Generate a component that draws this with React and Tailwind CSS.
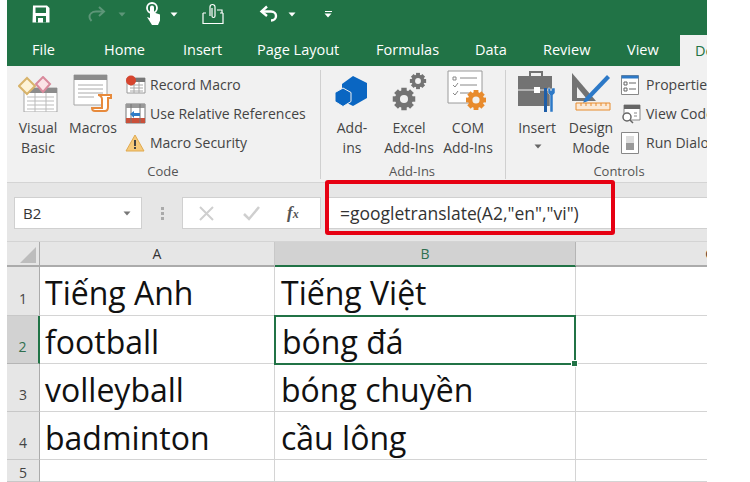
const F = { fontFamily: '"Open Sans", "Noto Sans", sans-serif' };
const Caret = ({ c = '#fff', className = '' }) => (
  <svg width="8" height="5" viewBox="0 0 8 5" className={className}><path d="M0.5 0.5h7L4 4.5z" fill={c} /></svg>
);
const Save = () => (
  <svg width="20" height="20" viewBox="0 0 20 20"><path d="M2 1.5h14l2.5 2.5v14.5h-17z" fill="#fff"/><path d="M4.5 3.5h10.5v5.5h-10.5z" fill="#217346"/><path d="M5 12h10v6.5h-10z" fill="#217346"/><path d="M7 14h5v4.5h-5z" fill="#fff"/></svg>
);
const Redo = () => (
  <svg width="20" height="16" viewBox="0 0 20 16" fill="none" stroke="#5d9678" strokeWidth="2"><path d="M12 1l5 4.5-5 4.5"/><path d="M17 5.5H9C5 5.5 2.5 8 2.5 11c0 1.500 1 3 2 4"/></svg>
);
const Touch = () => (
  <svg width="18" height="24" viewBox="0 0 18 24"><circle cx="7" cy="6" r="5" fill="none" stroke="#fff" strokeWidth="1.800"/><path d="M5 5.500a2 2 0 0 1 4 0v5l6 2v6l-2 4.500H7l-5-8 3 1z" fill="#fff"/></svg>
);
const Mail = () => (
  <svg width="24" height="22" viewBox="0 0 24 22" fill="none" stroke="#fff" strokeWidth="1.200"><path d="M1 10v10.500h20V10M1 10h3M18 10h3"/><path d="M8 13V4a2.500 2.500 0 0 1 5 0v9a1.500 1.500 0 0 1-3 0V5"/><path d="M15 7h5v3"/></svg>
);
const Undo = () => (
  <svg width="20" height="18" viewBox="0 0 20 18" fill="none" stroke="#fff" strokeWidth="2.400"><path d="M8 1.500L2.500 6.500 8 11"/><path d="M3 6.500h9c3 0 5 2 5 4.500s-2 4.500-5 4.500"/></svg>
);
const VB = () => (
  <svg width="40" height="36" viewBox="0 0 40 36"><path d="M6 12h33v24H6z" fill="#fff" stroke="#a5a5a5"/><path d="M6 12h33v5H6z" fill="#8c8c8c"/><path d="M9 21h27M9 25h27M9 29h27M9 33h27M17 17v19M28 17v19" stroke="#bbb"/><path d="M9 2l8 8-8 8-8-8z" fill="#fdf3d8" stroke="#d8b36a" strokeWidth="2"/><path d="M25 1l7 7-7 8-7-8z" fill="#fbe3e6" stroke="#d98a9c" strokeWidth="2"/></svg>
);
const Macros = () => (
  <svg width="40" height="38" viewBox="0 0 40 38"><path d="M1 1h33v30H1z" fill="#fff" stroke="#a5a5a5"/><path d="M1 1h33v5H1z" fill="#8c8c8c"/><path d="M5 11h25M5 15h25M5 19h25M5 23h16" stroke="#aaa"/><path d="M25 21h13v3h-3v9c0 2-1 4-3 4H22c-2 0-3-1-3-3h10V25c0-2-2-4-4-4z" fill="#fff" stroke="#e78a3c" strokeWidth="2"/></svg>
);
const Rec = () => (
  <svg width="21" height="19" viewBox="0 0 21 19"><path d="M2 3h18v15H2z" fill="#fff" stroke="#999"/><path d="M2 3h18v4H2z" fill="#777"/><path d="M5 10h13M5 13h13M5 16h13M9 7v11M14 7v11" stroke="#aaa"/><circle cx="6" cy="5.500" r="5" fill="#d6452f"/></svg>
);
const Rel = () => (
  <svg width="21" height="21" viewBox="0 0 21 21"><path d="M1 1h19v19H1z" fill="#fff" stroke="#777"/><path d="M1 1h19v4H1z" fill="#999"/><path d="M1 15h19v5H1z" fill="#c9503a"/><path d="M6 1v19M15 1v19" stroke="#777"/><path d="M5 11l4-3v2h6v3H9v2z" fill="#2f7cc6"/></svg>
);
const Warn = () => (
  <svg width="20" height="18" viewBox="0 0 20 18"><path d="M10 1l9 16H1z" fill="#f5c97a" stroke="#e0a94f"/><path d="M9 6h2v6H9zM9 13h2v2H9z" fill="#444"/></svg>
);
const Hex = () => (
  <svg width="36" height="36" viewBox="0 0 36 36"><path d="M19 0l14 7v15l-14 8-6-3v-8l-5-3V8z" fill="#0a66c2"/><path d="M9 12l8 4.500v9l-8 5-8-5v-9z" fill="#0a66c2" stroke="#f1f1f1"/></svg>
);
const Gear = ({ x, y, r, c }) => {
  const t = [0, 45, 90, 135].map(a => <rect key={a} x={x - r * 0.3} y={y - r * 1.25} width={r * 0.6} height={r * 2.5} fill={c} transform={`rotate(${a} ${x} ${y})`} />);
  return <g>{t}<circle cx={x} cy={y} r={r} fill={c} /><circle cx={x} cy={y} r={r * 0.45} fill="#f1f1f1" /></g>;
};
const Gears = () => (
  <svg width="36" height="40" viewBox="0 0 36 40"><Gear x={13} y={27} r={9} c="#737373" /><Gear x={27} y={9} r={6.500} c="#737373" /></svg>
);
const Com = () => (
  <svg width="42" height="42" viewBox="0 0 42 42"><path d="M1 1h34v32H1z" fill="#fff" stroke="#9a9a9a"/><path d="M6 7h3v3H6zM13 8h17M6 15l2 2 3-4M13 15h17M6 23l2 2 3-4M13 23h10" fill="none" stroke="#888"/><Gear x={29} y={30} r={8} c="#e88b2d" /></svg>
);
const Case = () => (
  <svg width="40" height="42" viewBox="0 0 40 42"><path d="M13 6V2h12v4" fill="none" stroke="#737373" strokeWidth="2"/><path d="M1 6h34v30H1z" fill="#737373"/><path d="M1 20h34" stroke="#f1f1f1"/><path d="M17 17h6v6h-6z" fill="#fff"/><path d="M27 18h3v24h-3z" fill="#1f5ea8"/><path d="M33 18l1 3 1-3 3 0v5l-2 2v17h-3V25l-2-2v-5z" fill="#2d79c7" stroke="#f1f1f1" strokeWidth="0.500"/></svg>
);
const Design = () => (
  <svg width="40" height="40" viewBox="0 0 40 40"><path d="M1 1l24 28H1z" fill="#737373"/><path d="M6 15l9 11H6z" fill="#f1f1f1"/><path d="M14 26L36 3l3 3-22 23-5 2z" fill="#2d79c7"/><path d="M5 31h34v7H5z" fill="#fbe9d6" stroke="#e88b2d"/><path d="M10 31v3M15 31v3M20 31v3M25 31v3M30 31v3M35 31v3" stroke="#e88b2d"/></svg>
);
const Prop = () => (
  <svg width="18" height="20" viewBox="0 0 18 20"><path d="M.5.5h17v19H.5z" fill="#fff" stroke="#888"/><path d="M.5.5h17v3H.5z" fill="#2d79c7"/><path d="M3 7h3v3H3zM3 13h3v3H3z" fill="none" stroke="#666"/><path d="M8 8h7M8 14h7" stroke="#666"/></svg>
);
const Code = () => (
  <svg width="20" height="20" viewBox="0 0 20 20"><path d="M3 1h16v15H3z" fill="#fff" stroke="#888"/><path d="M3 1h16v4H3z" fill="#666"/><circle cx="6" cy="13" r="4" fill="#fff" stroke="#666" strokeWidth="1.500"/><path d="M9 16l3 3" stroke="#666" strokeWidth="1.500"/><path d="M13 9h3M13 12h3" stroke="#888"/></svg>
);
const Dlg = () => (
  <svg width="18" height="22" viewBox="0 0 18 22"><path d="M.5.5h17v21H.5z" fill="#fff" stroke="#888"/><path d="M5 4h8v14H5z" fill="#ddd"/><path d="M5 11h8v7H5z" fill="#999"/></svg>
);

const Big = ({ icon, label, w, h = 'h-[40px]', ml = '' }) => (
  <div className={`flex flex-col items-center shrink-0 ${ml}`} style={{ width: w }}>
    <div className={`${h} flex items-end justify-center`}>{icon}</div>
    <div className="text-center text-[14px] leading-[20px] mt-[6px] text-[#444] whitespace-pre">{label}</div>
  </div>
);
const Small = ({ icon, label }) => (
  <div className="flex items-center h-[29px] text-[14px] text-[#444] whitespace-nowrap">
    <div className="w-[25px] flex justify-start shrink-0">{icon}</div>{label}
  </div>
);
const Cap = ({ children, className = '' }) => (
  <div className={`text-center text-[13px] leading-[16px] text-[#555] absolute bottom-0 ${className}`}>{children}</div>
);
const H = ({ children, sel }) => (
  <div className={`h-[25px] flex items-center justify-center text-[14px] border-b-2 border-r ${sel ? 'bg-[#d2d2d2] text-[#2f6f4f] border-b-[#217346] border-r-[#b5b5b5]' : 'bg-[#e6e6e6] text-[#333] border-b-[#ababab] border-r-[#c8c8c8]'}`}>{children}</div>
);
const RowH = ({ n, sel, h, pb = 'pb-[9px]' }) => (
  <div className={`flex items-end justify-center text-[14px] leading-[14px] border-b border-r ${pb} ${h} ${sel ? 'bg-[#d2d2d2] text-[#2f6f4f] border-r-2 border-r-[#217346] border-b-[#b5b5b5]' : 'bg-[#e6e6e6] text-[#444] border-b-[#c8c8c8] border-r-[#ababab]'}`}>{n}</div>
);
const Cell = ({ children, h, className = '' }) => (
  <div className={`${h} border-b border-[#d4d4d4] pl-[5px] text-[32px] leading-[52px] text-[#111] whitespace-nowrap overflow-hidden ${className}`}>{children}</div>
);

export default function App() {
  return (
    <div className="w-[750px] h-[482px] overflow-hidden bg-white pl-[7px]" style={F}>
      <div className="w-[700px] h-[482px] overflow-hidden relative">
        <div className="bg-[#217346] h-[66px] text-white relative">
          <div className="flex items-center h-[34px] pl-[24px] pb-[6px]">
            <Save />
            <div className="ml-[36px]"><Redo /></div>
            <Caret c="#5d9678" className="ml-[11px]" />
            <div className="ml-[19px]"><Touch /></div>
            <Caret className="ml-[7px]" />
            <div className="ml-[24px]"><Mail /></div>
            <div className="ml-[33px]"><Undo /></div>
            <Caret className="ml-[9px]" />
            <div className="ml-[28px] flex flex-col items-center gap-[1px]">
              <div className="w-[7px] h-px bg-white" />
              <Caret />
            </div>
          </div>
          <div className="flex text-[14.500px] h-[32px] items-center pl-[25px] whitespace-nowrap">
            <span className="w-[72px]">File</span>
            <span className="w-[79px]">Home</span>
            <span className="w-[74px]">Insert</span>
            <span className="w-[119px]">Page Layout</span>
            <span className="w-[99px]">Formulas</span>
            <span className="w-[68px]">Data</span>
            <span className="w-[84px]">Review</span>
            <span className="w-[53px]">View</span>
          </div>
          <div className="absolute right-0 top-[35px] w-[27px] h-[31px] bg-[#f1f1f1] text-[#217346] text-[14.500px] pl-[15px] pt-[5px] overflow-hidden">De</div>
        </div>

        <div className="bg-[#f1f1f1] h-[117px] flex items-start pt-[4px] border-b border-[#d4d4d4]">
          <div className="w-[314px] h-[109px] relative flex pt-[2px] pl-[6px] border-r border-r-[#d0d0d0] shrink-0">
            <Big icon={<VB />} w="50px" label={'Visual\nBasic'} />
            <Big icon={<Macros />} w="50px" ml="ml-[5px]" label="Macros" />
            <div className="flex flex-col ml-[7px] -mt-[2px]">
              <Small icon={<Rec />} label="Record Macro" />
              <Small icon={<Rel />} label="Use Relative References" />
              <Small icon={<Warn />} label="Macro Security" />
            </div>
            <Cap className="left-[120px] w-[72px]">Code</Cap>
          </div>
          <div className="w-[185px] h-[109px] relative flex pt-[2px] pl-[6px] border-r border-r-[#d0d0d0] shrink-0">
            <Big icon={<Hex />} w="50px" label={'Add-\nins'} />
            <Big icon={<Gears />} w="60px" label={'Excel\nAdd-Ins'} ml="ml-[2px]" />
            <Big icon={<Com />} w="58px" label={'COM\nAdd-Ins'} />
            <Cap className="left-[61px] w-[60px]">Add-Ins</Cap>
          </div>
          <div className="flex-1 h-[109px] relative flex pt-[2px] pl-[11px] overflow-hidden">
            <Big icon={<Case />} w="40px" label={'Insert\n'} />
            <Big icon={<Design />} w="48px" ml="ml-[10px]" label={'Design\nMode'} />
            <div className="flex flex-col ml-[6px] -mt-[2px]">
              <Small icon={<Prop />} label="Properties" />
              <Small icon={<Code />} label="View Code" />
              <Small icon={<Dlg />} label="Run Dialog" />
            </div>
            <Caret c="#666" className="absolute left-[28px] top-[74px]" />
            <Cap className="left-[83px] w-[60px]">Controls</Cap>
          </div>
        </div>

        <div className="bg-[#e6e6e6] h-[59px] flex items-start pt-[14px] border-b border-[#d4d4d4]">
          <div className="ml-[7px] w-[128px] h-[32px] bg-white border border-[#d0d0d0] flex items-center justify-between pl-[8px] pr-[10px] text-[15px] text-[#333] shrink-0">
            B2<Caret c="#777" />
          </div>
          <div className="w-[40px] h-[32px] flex flex-col items-center justify-center gap-[2px] shrink-0">
            <i className="w-[3px] h-[3px] bg-[#aaa]" /><i className="w-[3px] h-[3px] bg-[#aaa]" /><i className="w-[3px] h-[3px] bg-[#aaa]" />
          </div>
          <div className="w-[139px] h-[32px] bg-white border border-[#d0d0d0] flex items-center pl-[16px] shrink-0">
            <svg width="15" height="15" viewBox="0 0 15 15" stroke="#cfcfcf" strokeWidth="2"><path d="M1 1l13 13M14 1L1 14"/></svg>
            <svg width="17" height="15" viewBox="0 0 17 15" stroke="#cfcfcf" strokeWidth="2.500" fill="none" className="ml-[29px]"><path d="M1 8l5 5L16 1"/></svg>
            <span className="ml-[27px] text-[17px] font-bold italic text-[#555]" style={{ fontFamily: '"Liberation Serif", serif' }}>f<span className="text-[12px]">x</span></span>
          </div>
          <div className="flex-1 h-[32px] ml-[5px] bg-white border-y border-[#d0d0d0] flex items-center pl-[14px] text-[17.500px] text-[#333] whitespace-nowrap">
            =googletranslate(A2,"en","vi")
          </div>
        </div>

        <div className="grid grid-cols-[33px_235px_301px_1fr]">
          <div className="h-[25px] bg-[#e6e6e6] border-b-2 border-r border-b-[#ababab] border-r-[#ababab] flex items-end justify-end pr-[3px] pb-[2px]">
            <svg width="16" height="16" viewBox="0 0 16 16"><path d="M16 0v16H0z" fill="#bdbdbd"/></svg>
          </div>
          <H>A</H>
          <H sel>B</H>
          <div className="h-[25px] bg-[#e6e6e6] border-b-2 border-b-[#ababab] flex items-center justify-end text-[14px] text-[#333] overflow-hidden"><span className="translate-x-[7px]">C</span></div>

          <RowH n="1" h="h-[49px]" />
          <Cell h="h-[49px]" className="border-r">Tiếng Anh</Cell>
          <Cell h="h-[49px]" className="pl-[6px] border-r">Tiếng Việt</Cell>
          <Cell h="h-[49px]" />

          <RowH n="2" h="h-[48px]" sel />
          <Cell h="h-[48px]" className="border-r">football</Cell>
          <div className="relative h-[50px] -mt-px -mb-px -ml-px border-2 border-[#217346] pl-[6px] text-[32px] leading-[50px] text-[#111] whitespace-nowrap z-10">
            bóng đá
            <div className="absolute -right-[4px] -bottom-[4px] w-[7px] h-[7px] bg-[#217346] border border-white" />
          </div>
          <Cell h="h-[48px]" />

          <RowH n="3" h="h-[48px]" />
          <Cell h="h-[48px]" className="border-r">volleyball</Cell>
          <Cell h="h-[48px]" className="pl-[6px] border-r">bóng chuyền</Cell>
          <Cell h="h-[48px]" />

          <RowH n="4" h="h-[48px]" />
          <Cell h="h-[48px]" className="border-r">badminton</Cell>
          <Cell h="h-[48px]" className="pl-[6px] border-r">cầu lông</Cell>
          <Cell h="h-[48px]" />

          <RowH n="5" h="h-[22px]" pb="pb-[1px]" />
          <Cell h="h-[22px]" className="border-r" />
          <Cell h="h-[22px]" className="border-r" />
          <Cell h="h-[22px]" />
        </div>

        <div className="absolute left-[318px] top-[180px] w-[290px] h-[55px] border-[4px] border-[#e60012] rounded-[3px]" />
      </div>
    </div>
  );
}
